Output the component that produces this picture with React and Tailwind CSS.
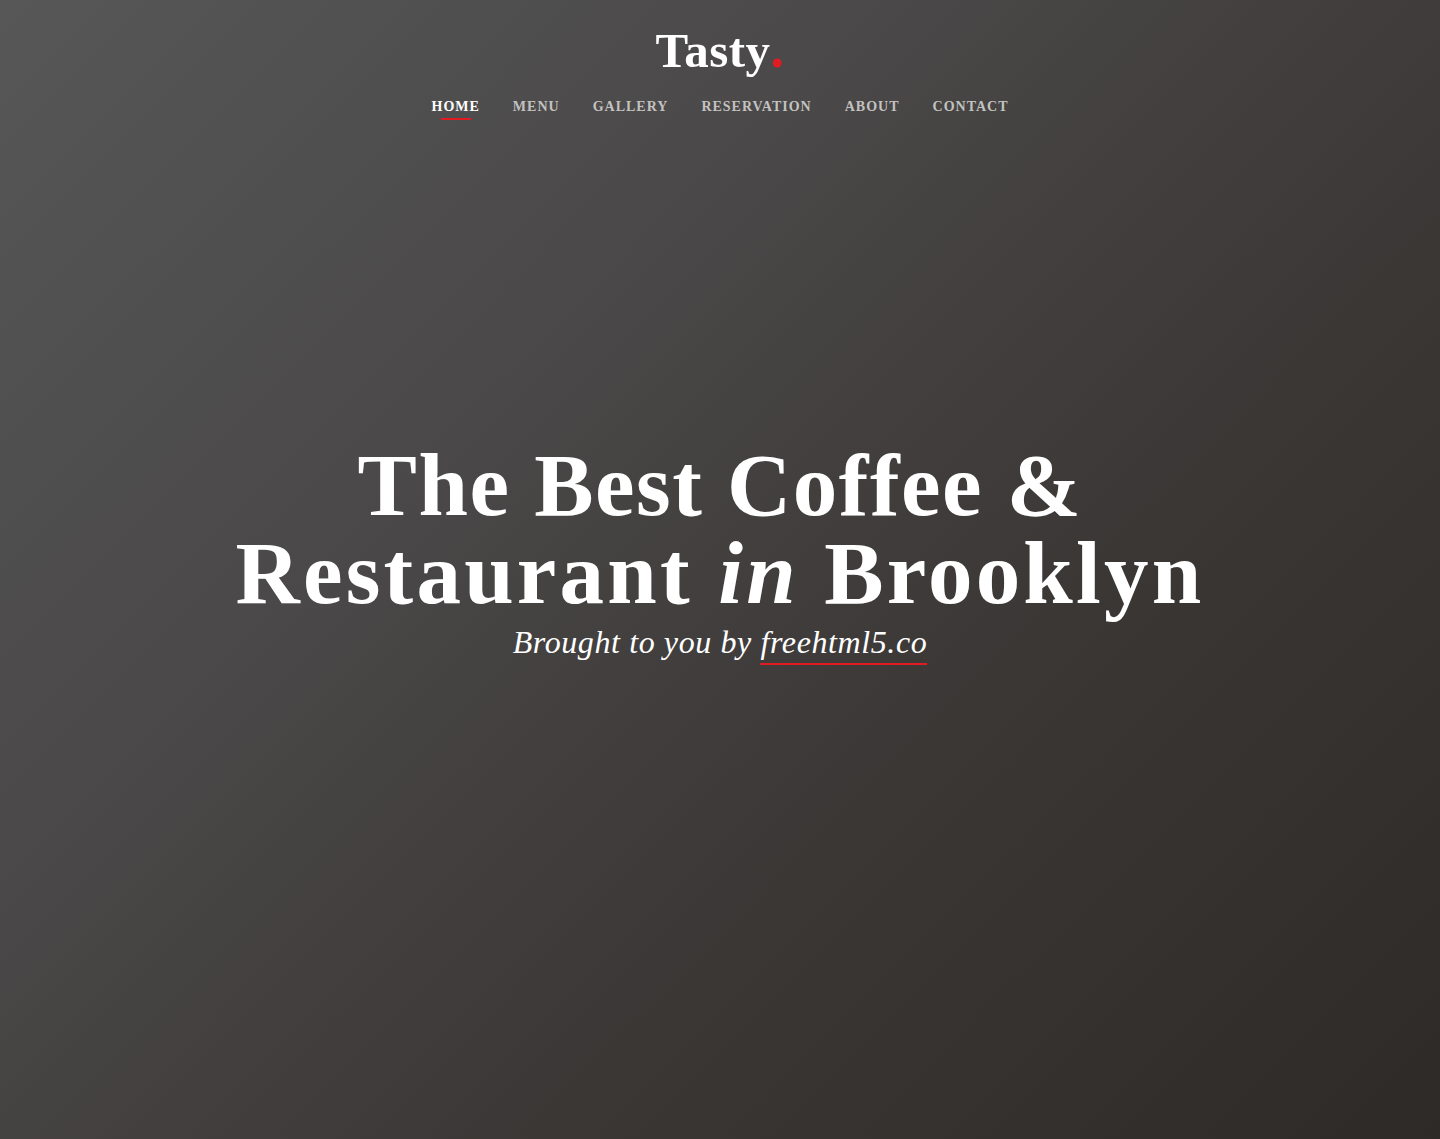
const navItems = ['Home', 'Menu', 'Gallery', 'Reservation', 'About', 'Contact'];

export default function App() {
  return (
    <div
      className="min-h-[1139px] w-full flex flex-col items-center text-white bg-[linear-gradient(135deg,#575757_0%,#4a4848_35%,#3a3735_65%,#2e2a27_100%)]"
      style={{ fontFamily: '"Liberation Serif", "DejaVu Serif", serif' }}
    >
      {/* Header */}
      <header className="flex flex-col items-center pt-[23px]">
        <a href="#" className="text-[49px] font-bold leading-[52px] tracking-[0.5px]">
          Tasty<span className="text-[#e21b23] text-[54px]">.</span>
        </a>
        <nav className="mt-[20px] flex items-center gap-[33px]">
          {navItems.map((item, i) => (
            <a
              key={item}
              href="#"
              className={
                'relative text-[14px] font-bold uppercase tracking-[1px] leading-[20px] ' +
                (i === 0 ? 'text-white' : 'text-[#c4c2c0]')
              }
            >
              {item}
              {i === 0 && (
                <span className="absolute left-1/2 -translate-x-1/2 top-[21px] w-[30px] h-[2px] bg-[#e21b23]" />
              )}
            </a>
          ))}
        </nav>
      </header>

      {/* Hero */}
      <section className="flex flex-col items-center text-center mt-[324px]">
        <h1 className="text-[89px] font-bold leading-[88px] tracking-[1.5px]">
          The Best Coffee &amp;
          <br />
          <span className="tracking-[3.2px]">
            Restaurant <em className="italic">in</em> Brooklyn
          </span>
        </h1>
        <p className="mt-[5px] text-[32px] italic leading-[40px] tracking-[0.6px]">
          Brought to you by{' '}
          <a href="#" className="border-b-2 border-[#e21b23] pb-[3px]">
            freehtml5.co
          </a>
        </p>
      </section>
    </div>
  );
}
